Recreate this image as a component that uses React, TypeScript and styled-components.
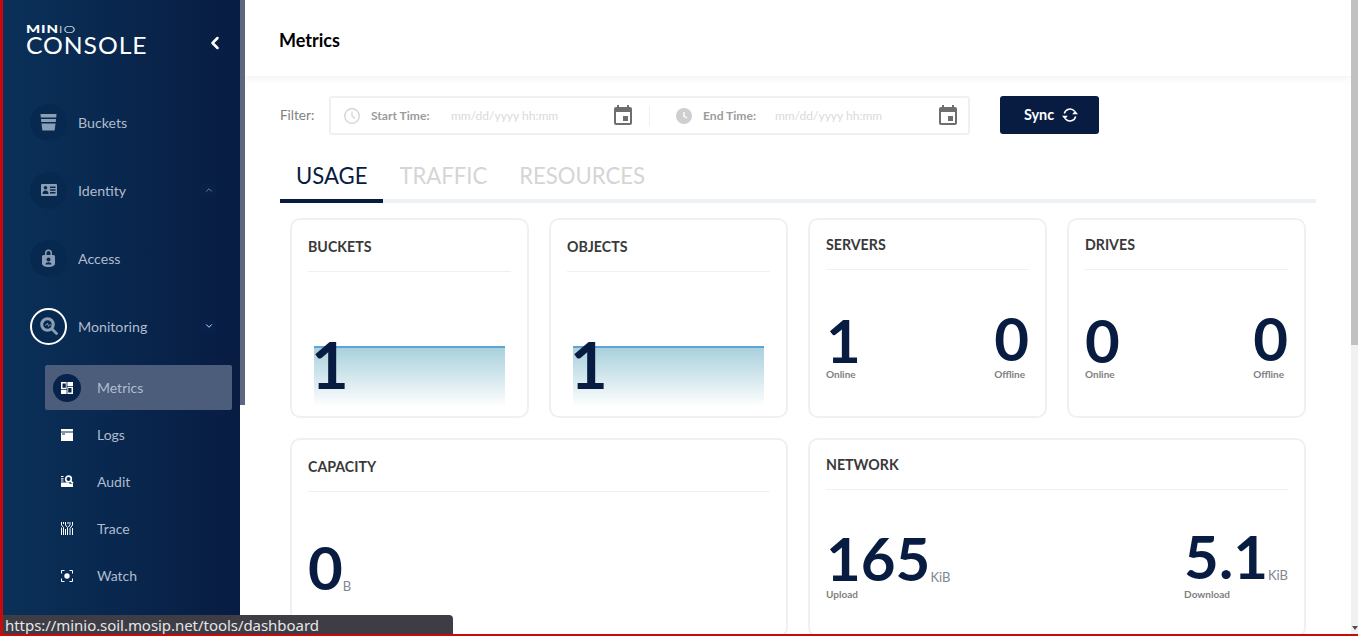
import React from "react";
import styled, { createGlobalStyle } from "styled-components";
import { ChevronDown, ChevronLeft, ChevronUp } from "lucide-react";

const GlobalStyle = createGlobalStyle`
  html, body {
    margin: 0;
    height: 100%;
    overflow: hidden;
    background: #fff;
    font-family: Lato, "Liberation Sans", sans-serif;
  }
  * { box-sizing: border-box; }
`;

const Page = styled.div`
  position: relative;
  display: flex;
  height: 636px;
  overflow: hidden;
  border-left: 3px solid #c80a0a;
`;

const Sidebar = styled.aside`
  flex: 0 0 237px;
  height: 100%;
  background: linear-gradient(90deg, #0a3159 0%, #081c42 100%);
`;

const SideScroll = styled.div`
  flex: 0 0 5px;
  height: 100%;
  background: #fff;
`;

const SideThumb = styled.div`
  height: 405px;
  background: #5d6780;
`;

const SideHeader = styled.div`
  height: 88px;
  padding: 24px 0 0 23px;
  display: flex;
  justify-content: space-between;
  color: #fff;
`;

const Logo = styled.div`
  display: flex;
  flex-direction: column;
`;

const LogoTop = styled.div`
  font-size: 10.5px;
  line-height: 10px;
  font-weight: 900;
  letter-spacing: 0.6px;
  transform-origin: left;
  transform: scaleX(1.42);
  span { font-weight: 300; }
`;

const LogoName = styled.div`
  font-size: 24px;
  line-height: 24px;
  font-weight: 400;
  letter-spacing: 0.9px;
  margin-top: -1px;
  transform-origin: left;
  transform: scaleX(1.03);
`;

const Collapse = styled.div`
  margin: 9px 15px 0 0;
  height: 20px;
  display: flex;
  color: #fff;
`;

const NavItem = styled.div`
  height: 68px;
  padding-left: 27px;
  padding-right: 24px;
  display: flex;
  align-items: center;
  gap: 11px;
`;

const NavCircle = styled.div<{ $selected?: boolean }>`
  width: 37px;
  height: 37px;
  border-radius: 50%;
  display: flex;
  align-items: center;
  justify-content: center;
  color: #8a9fb5;
  background: #07294f;
  border: ${({ $selected }) => ($selected ? "2px solid #fff" : "none")};
`;

const NavLabel = styled.span`
  flex: 1;
  font-size: 14.2px;
  color: #afbccd;
`;

const Toggle = styled.div<{ $open?: boolean }>`
  width: 15px;
  height: 15px;
  border-radius: 2px;
  display: flex;
  align-items: center;
  justify-content: center;
  background: #07214a;
  color: ${({ $open }) => ($open ? "#fff" : "#7f8fa6")};
`;

const SubList = styled.div`
  margin: 5px 8px 0 42px;
`;

const SubItem = styled.div<{ $active?: boolean }>`
  height: ${({ $active }) => ($active ? "45px" : "47px")};
  margin-bottom: ${({ $active }) => ($active ? "1px" : "0")};
  padding-left: 8px;
  display: flex;
  align-items: center;
  gap: 16px;
  border-radius: 2px;
  background: ${({ $active }) => ($active ? "#4b5d7b" : "transparent")};
`;

const SubIcon = styled.div<{ $active?: boolean }>`
  width: 28px;
  height: 28px;
  border-radius: 50%;
  display: flex;
  align-items: center;
  justify-content: center;
  color: #fff;
  background: ${({ $active }) => ($active ? "#07224b" : "transparent")};
`;

const SubLabel = styled.span`
  font-size: 14px;
  color: #afbccd;
`;

const Main = styled.main`
  flex: 1;
  min-width: 0;
  height: 100%;
  overflow: hidden;
`;

const Header = styled.header`
  height: 76px;
  padding: 4px 0 0 34px;
  display: flex;
  align-items: center;
  background: #fff;
  box-shadow: 0 2px 8px rgba(0, 0, 0, 0.06);
`;

const Title = styled.h1`
  margin: 0;
  font-size: 18px;
  font-weight: 700;
  color: #000;
`;

const Content = styled.div`
  padding: 20px 35px 0;
`;

const FilterRow = styled.div`
  display: flex;
  align-items: flex-start;
`;

const FilterLabel = styled.span`
  width: 49px;
  font-size: 13.5px;
  line-height: 38px;
  color: #808080;
`;

const FilterBox = styled.div`
  width: 641px;
  height: 39px;
  padding-left: 13px;
  display: flex;
  align-items: center;
  border: 2px solid #eef1f4;
  border-radius: 3px;
`;

const TimeField = styled.div<{ $width: number }>`
  width: ${({ $width }) => $width}px;
  display: flex;
  align-items: center;
`;

const TimeLabel = styled.span<{ $width: number }>`
  width: ${({ $width }) => $width}px;
  margin-left: 11px;
  font-size: 12.1px;
  font-weight: 700;
  color: #9c9c9c;
`;

const Placeholder = styled.span`
  flex: 1;
  font-size: 12px;
  color: #dadada;
`;

const Separator = styled.div`
  width: 1px;
  height: 20px;
  margin: 0 26px 0 14px;
  background: #eef1f4;
`;

const SyncButton = styled.button`
  width: 99px;
  height: 38px;
  margin-left: 30px;
  padding: 0 0 1px 3px;
  display: flex;
  align-items: center;
  justify-content: center;
  gap: 8px;
  border: 0;
  border-radius: 3px;
  background: #081c42;
  color: #fff;
  font-family: inherit;
  font-size: 14.4px;
  font-weight: 700;
`;

const Tabs = styled.div`
  display: flex;
  margin-top: 17px;
  border-bottom: 4px solid #eef1f4;
`;

const Tab = styled.div<{ $active?: boolean }>`
  height: 51px;
  margin-bottom: -4px;
  padding: 1px 16px 0;
  font-size: 22.1px;
  line-height: 46px;
  color: ${({ $active }) => ($active ? "#081c42" : "#d5d5d5")};
  border-bottom: 4px solid ${({ $active }) => ($active ? "#081c42" : "transparent")};
`;

const Grid = styled.div`
  display: grid;
  width: 1016px;
  margin: 15px 0 0 10px;
  grid-template-columns: repeat(4, 239px);
  grid-auto-rows: 200px;
  gap: 20px;
`;

const Card = styled.section<{ $span?: number }>`
  grid-column: span ${({ $span }) => $span ?? 1};
  padding: 0 16px;
  border: 2px solid #eef1f4;
  border-radius: 10px;
  background: #fff;
`;

const CardTitle = styled.h3<{ $compact?: boolean }>`
  margin: 0;
  padding: ${({ $compact }) => ($compact ? "15px" : "17px")} 0 14px;
  font-size: 14.2px;
  line-height: 20px;
  font-weight: 700;
  color: #393939;
  border-bottom: 1px solid #eef1f4;
`;

const Chart = styled.div`
  position: relative;
  width: 191px;
  height: 61px;
  margin: 74px 0 0 6px;
  svg { display: block; }
`;

const ChartValue = styled.div`
  position: absolute;
  left: -3px;
  top: -14px;
  font-size: 65px;
  line-height: 65px;
  font-weight: 700;
  color: #081c42;
`;

const Stats = styled.div<{ $top: number }>`
  display: flex;
  justify-content: space-between;
  margin-top: ${({ $top }) => $top}px;
`;

const Stat = styled.div`
  display: flex;
  flex-direction: column;
`;

const StatValue = styled.div<{ $lift?: boolean }>`
  display: flex;
  align-items: baseline;
  margin: ${({ $lift }) => ($lift ? "-2px 0 2px" : "0")};
  font-size: 60px;
  line-height: 56px;
  font-weight: 700;
  color: #081c42;
`;

const Unit = styled.span`
  font-size: 13px;
  line-height: 13px;
  font-weight: 400;
  color: #80868f;
  transform: translateY(1px);
`;

const StatLabel = styled.span<{ $gap?: number }>`
  margin-top: ${({ $gap }) => $gap ?? 0}px;
  font-size: 10px;
  line-height: 12px;
  font-weight: 700;
  color: #7f7f7f;
`;

const StatusTip = styled.div`
  position: absolute;
  left: 0;
  bottom: 2px;
  width: 450px;
  height: 19px;
  padding-left: 2px;
  background: #3e3d46;
  border-radius: 0 4px 0 0;
  color: #e6e6e6;
  font-family: "Noto Sans", "DejaVu Sans", sans-serif;
  font-size: 15px;
  line-height: 21px;
  letter-spacing: -0.05px;
  white-space: nowrap;
  overflow: hidden;
`;

const BottomEdge = styled.div`
  position: absolute;
  left: -3px;
  right: 0;
  bottom: 0;
  height: 2px;
  background: #c80a0a;
`;

const PageScroll = styled.div`
  flex: 0 0 7px;
  height: 100%;
  padding-bottom: 6px;
  display: flex;
  flex-direction: column;
  justify-content: space-between;
  align-items: center;
  background: #f1f1f1;
`;

const PageThumb = styled.div`
  width: 100%;
  height: 345px;
  background: #c1c1c1;
`;

const ScrollArrow = styled.div`
  width: 0;
  height: 0;
  border: 3px solid transparent;
  border-bottom: 0;
  border-top: 4px solid #505050;
`;

const BucketIcon = () => (
  <svg width="17" height="17" viewBox="0 0 17 17" fill="currentColor">
    <path d="M.5 0h16l-.3 3.500H.8z" />
    <path d="M1 5h15l-.2 3H1.200z" />
    <path d="M1.500 9.500h14l-.9 7H2.400z" />
  </svg>
);

const IdentityIcon = () => (
  <svg width="16" height="12" viewBox="0 0 16 12" fill="currentColor">
    <path
      fillRule="evenodd"
      d="M1 0h14a1 1 0 0 1 1 1v10a1 1 0 0 1-1 1H1a1 1 0 0 1-1-1V1a1 1 0 0 1 1-1zm3.500 2a1.800 1.800 0 1 0 0 3.600 1.800 1.800 0 0 0 0-3.600zM1.500 10h6c0-2-1-3.400-3-3.400S1.500 8 1.500 10zM9 2.500V4h5.500V2.500zm0 2.800v1.400h5.500V5.300zM9 8v1.400h5.500V8z"
    />
  </svg>
);

const AccessIcon = () => (
  <svg width="13" height="18" viewBox="0 0 13 18" fill="currentColor">
    <path
      fillRule="evenodd"
      d="M3 6V4a3.500 3.500 0 0 1 7 0v2h1.500A1.500 1.500 0 0 1 13 7.500v7c0 2-3 3.500-6.500 3.500S0 16.500 0 14.500v-7A1.500 1.500 0 0 1 1.500 6zm1.500 0h4V4a2 2 0 0 0-4 0zm2 2.500a2 2 0 1 0 0 4 2 2 0 0 0 0-4zm-3 7h6c0-1.400-1.200-2.300-3-2.300s-3 .9-3 2.300z"
    />
  </svg>
);

const MonitorIcon = () => (
  <svg width="18" height="18" viewBox="0 0 18 18" fill="none">
    <circle cx="7.500" cy="7.500" r="5.800" stroke="currentColor" strokeWidth="3" />
    <path d="M12 12l4.500 4.500" stroke="currentColor" strokeWidth="2.800" strokeLinecap="round" />
    <path d="M5 8h1.500l1-2 1 3.500.8-1.500H13" stroke="currentColor" strokeWidth=".8" />
  </svg>
);

const MetricsIcon = () => (
  <svg width="12" height="12" viewBox="0 0 12 12" fill="currentColor">
    <path
      fillRule="evenodd"
      d="M0 0h12v12H0zM1.500 1.500v4.200h3.300V1.500zm5.700 4.500v4.500h3.300V6zM5.600 0h.8v12h-.8zM0 7h5.600v.8H0zM6.400 4.300H12v.8H6.400z"
    />
  </svg>
);

const LogsIcon = () => (
  <svg width="12" height="12" viewBox="0 0 12 12" fill="currentColor">
    <path fillRule="evenodd" d="M0 0h12v2.500H0zM0 3.500h12V12H0zm1 1v1h3v-1z" />
  </svg>
);

const AuditIcon = () => (
  <svg width="13" height="13" viewBox="0 0 13 13" fill="none">
    <path d="M0 7.500h7a4 4 0 0 0 3 1.300h2V12H0z" fill="currentColor" />
    <path d="M0 1.500h2.500M0 3.800h2.500M0 6h2.500" stroke="currentColor" strokeWidth="1.200" />
    <circle cx="7.500" cy="4" r="2.800" stroke="currentColor" strokeWidth="1.700" />
    <path d="M9.500 6l2.500 2.300" stroke="currentColor" strokeWidth="1.700" />
  </svg>
);

const TraceIcon = () => (
  <svg width="12" height="13" viewBox="0 0 12 13" fill="none" stroke="currentColor" strokeWidth="1">
    <path d="M.5 0v3l2 2.500V13M2.500 0v2M4.500 0v3l2 2.500V13M.5 5.500V13M4.500 7V13" />
    <path d="M7 0v2M9 0v2.500L7.500 5M11.500 0v3L9 6.500V13M11.500 6V13" />
  </svg>
);

const WatchIcon = () => (
  <svg width="12" height="12" viewBox="0 0 12 12" fill="none">
    <path d="M.5 3.500V.5h3M8.500.5h3v3M11.500 8.500v3h-3M3.500 11.500h-3v-3" stroke="currentColor" />
    <circle cx="6" cy="6" r="2.700" fill="currentColor" />
  </svg>
);

const SyncIcon = () => (
  <svg width="16" height="16" viewBox="0 0 16 16" fill="none">
    <path d="M2.300 6.500A5.900 5.900 0 0 1 12.600 4.300" stroke="currentColor" strokeWidth="1.500" />
    <path d="M13.700 9.500A5.900 5.900 0 0 1 3.400 11.700" stroke="currentColor" strokeWidth="1.500" />
    <path d="M10.200 7.200h5.800l-2.900-3.400zM0 8.800h5.800l-2.900 3.400z" fill="currentColor" />
  </svg>
);

const CalendarIcon = () => (
  <svg width="24" height="24" viewBox="0 0 24 24" fill="#6e6e6e">
    <path d="M17 12h-5v5h5v-5zM16 1v2H8V1H6v2H5c-1.110 0-1.990.9-1.990 2L3 19c0 1.100.89 2 2 2h14c1.100 0 2-.9 2-2V5c0-1.100-.9-2-2-2h-1V1h-2zm3 18H5V8h14v11z" />
  </svg>
);

const ClockOutline = () => (
  <svg width="16" height="16" viewBox="0 0 16 16" fill="none" stroke="#cfcfcf">
    <circle cx="8" cy="8" r="7.300" strokeWidth="1.200" />
    <path d="M8 3.500V8l3 2.500" strokeWidth="1.100" />
  </svg>
);

const ClockFilled = () => (
  <svg width="16" height="16" viewBox="0 0 16 16" fill="none">
    <circle cx="8" cy="8" r="8" fill="#cfcfcf" />
    <path d="M8 4v4.300l3 1.700" stroke="#fff" strokeWidth="1.400" />
  </svg>
);

const AreaChart = ({ id }: { id: string }) => (
  <svg width="191" height="61" viewBox="0 0 191 61">
    <defs>
      <linearGradient id={id} x1="0" y1="0" x2="0" y2="1">
        <stop offset="0%" stopColor="#a6cfdb" />
        <stop offset="100%" stopColor="#ffffff" />
      </linearGradient>
    </defs>
    <rect width="191" height="61" fill={`url(#${id})`} />
    <rect width="191" height="2" fill="#5fa4d6" />
  </svg>
);

const subItems = [
  { label: "Metrics", icon: <MetricsIcon />, active: true },
  { label: "Logs", icon: <LogsIcon /> },
  { label: "Audit", icon: <AuditIcon /> },
  { label: "Trace", icon: <TraceIcon /> },
  { label: "Watch", icon: <WatchIcon /> },
];

const CountCard = ({ title, online, offline }: { title: string; online: number; offline: number }) => (
  <Card>
    <CardTitle $compact>{title}</CardTitle>
    <Stats $top={42}>
      <Stat>
        <StatValue>{online}</StatValue>
        <StatLabel>Online</StatLabel>
      </Stat>
      <Stat>
        <StatValue $lift>{offline}</StatValue>
        <StatLabel>Offline</StatLabel>
      </Stat>
    </Stats>
  </Card>
);

const ChartCard = ({ title, value, id }: { title: string; value: number; id: string }) => (
  <Card>
    <CardTitle>{title}</CardTitle>
    <Chart>
      <AreaChart id={id} />
      <ChartValue>{value}</ChartValue>
    </Chart>
  </Card>
);

export default function App() {
  return (
    <Page>
      <GlobalStyle />
      <Sidebar>
        <SideHeader>
          <Logo>
            <LogoTop>
              MIN<span>IO</span>
            </LogoTop>
            <LogoName>CONSOLE</LogoName>
          </Logo>
          <Collapse>
            <ChevronLeft size={20} strokeWidth={3} />
          </Collapse>
        </SideHeader>
        <NavItem>
          <NavCircle>
            <BucketIcon />
          </NavCircle>
          <NavLabel>Buckets</NavLabel>
        </NavItem>
        <NavItem>
          <NavCircle>
            <IdentityIcon />
          </NavCircle>
          <NavLabel>Identity</NavLabel>
          <Toggle>
            <ChevronUp size={10} strokeWidth={2} />
          </Toggle>
        </NavItem>
        <NavItem>
          <NavCircle>
            <AccessIcon />
          </NavCircle>
          <NavLabel>Access</NavLabel>
        </NavItem>
        <NavItem>
          <NavCircle $selected>
            <MonitorIcon />
          </NavCircle>
          <NavLabel>Monitoring</NavLabel>
          <Toggle $open>
            <ChevronDown size={10} strokeWidth={2} />
          </Toggle>
        </NavItem>
        <SubList>
          {subItems.map((item) => (
            <SubItem key={item.label} $active={item.active}>
              <SubIcon $active={item.active}>{item.icon}</SubIcon>
              <SubLabel>{item.label}</SubLabel>
            </SubItem>
          ))}
        </SubList>
      </Sidebar>
      <SideScroll>
        <SideThumb />
      </SideScroll>
      <Main>
        <Header>
          <Title>Metrics</Title>
        </Header>
        <Content>
          <FilterRow>
            <FilterLabel>Filter:</FilterLabel>
            <FilterBox>
              <TimeField $width={291}>
                <ClockOutline />
                <TimeLabel $width={80}>Start Time:</TimeLabel>
                <Placeholder>mm/dd/yyyy hh:mm</Placeholder>
                <CalendarIcon />
              </TimeField>
              <Separator />
              <TimeField $width={284}>
                <ClockFilled />
                <TimeLabel $width={72}>End Time:</TimeLabel>
                <Placeholder>mm/dd/yyyy hh:mm</Placeholder>
                <CalendarIcon />
              </TimeField>
            </FilterBox>
            <SyncButton>
              Sync
              <SyncIcon />
            </SyncButton>
          </FilterRow>
          <Tabs>
            <Tab $active>USAGE</Tab>
            <Tab>TRAFFIC</Tab>
            <Tab>RESOURCES</Tab>
          </Tabs>
          <Grid>
            <ChartCard title="BUCKETS" value={1} id="bucketsFill" />
            <ChartCard title="OBJECTS" value={1} id="objectsFill" />
            <CountCard title="SERVERS" online={1} offline={0} />
            <CountCard title="DRIVES" online={0} offline={0} />
            <Card $span={2}>
              <CardTitle>CAPACITY</CardTitle>
              <Stats $top={47}>
                <Stat>
                  <StatValue>
                    0<Unit>B</Unit>
                  </StatValue>
                </Stat>
              </Stats>
            </Card>
            <Card $span={2}>
              <CardTitle $compact>NETWORK</CardTitle>
              <Stats $top={40}>
                <Stat>
                  <StatValue>
                    165<Unit>KiB</Unit>
                  </StatValue>
                  <StatLabel $gap={2}>Upload</StatLabel>
                </Stat>
                <Stat>
                  <StatValue $lift>
                    5.1<Unit>KiB</Unit>
                  </StatValue>
                  <StatLabel $gap={2}>Download</StatLabel>
                </Stat>
              </Stats>
            </Card>
          </Grid>
        </Content>
      </Main>
      <PageScroll>
        <PageThumb />
        <ScrollArrow />
      </PageScroll>
      <StatusTip>https://minio.soil.mosip.net/tools/dashboard</StatusTip>
      <BottomEdge />
    </Page>
  );
}
